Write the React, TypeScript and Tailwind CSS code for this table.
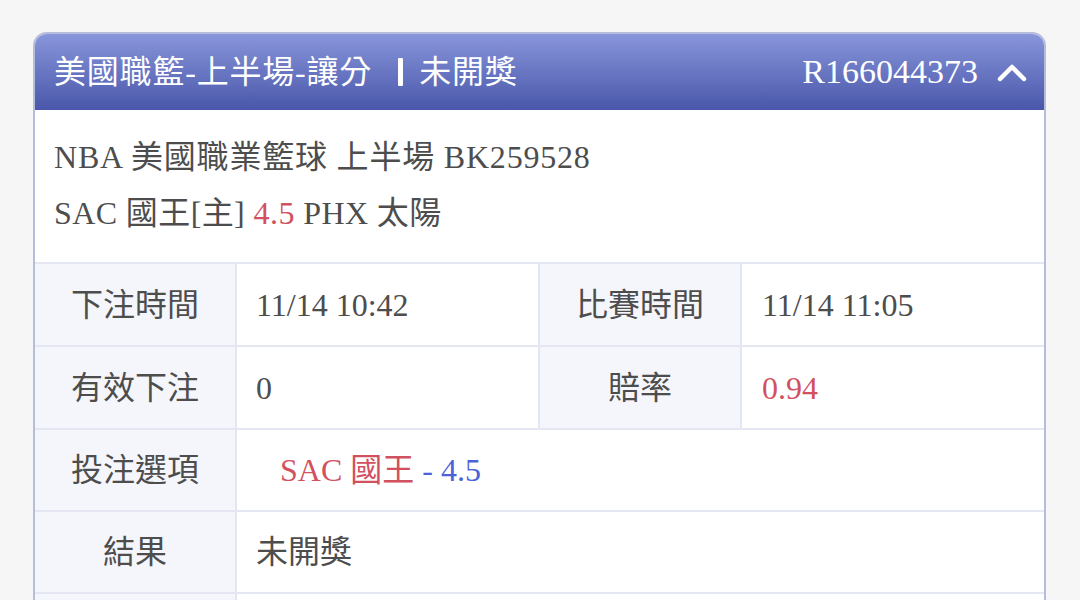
import React from "react";

const font = { fontFamily: '"Liberation Serif", "Noto Sans CJK TC", serif' };

function Label({ children }: { children: React.ReactNode }) {
  return (
    <div className="w-[202px] shrink-0 bg-[#f5f6fb] border-r-2 border-[#e4e6f2] flex items-center justify-center text-[#4d4d4d]">
      {children}
    </div>
  );
}

export default function App() {
  return (
    <div className="w-[1080px] h-[600px] bg-[#f6f6f6] overflow-hidden pt-[32px] pl-[33px]" style={font}>
      <div className="w-[1013px] h-[600px] border-2 border-[#b6bcdc] rounded-t-[14px] overflow-hidden bg-white text-[32px] leading-none">
        {/* Header */}
        <div className="h-[76px] bg-gradient-to-b from-[#8996db] to-[#4a57aa] flex items-center justify-between pl-[19px] pr-[17px] text-white">
          <div className="flex items-center tracking-[0.8px]">
            <span>美國職籃-上半場-讓分</span>
            <span className="w-[5px] h-[28px] bg-white ml-[26px] mr-[16px] rounded-[1px]" />
            <span>未開獎</span>
          </div>
          <div className="flex items-center">
            <span className="text-[34px]">R166044373</span>
            <svg className="ml-[19px]" width="30" height="22" viewBox="0 0 30 22">
              <polyline points="3,18 15,6 27,18" fill="none" stroke="white" strokeWidth="4.5" strokeLinecap="round" strokeLinejoin="round" />
            </svg>
          </div>
        </div>

        {/* Info */}
        <div className="h-[152px] pl-[19px] pt-[19px] text-[#4d4d4d]">
          <div className="h-[56px] flex items-center tracking-[0.8px]">NBA 美國職業籃球 上半場 BK259528</div>
          <div className="h-[56px] flex items-center tracking-[0.4px]">
            <span>SAC 國王[主]&nbsp;</span>
            <span className="text-[#d2515f]">4.5</span>
            <span>&nbsp;PHX 太陽</span>
          </div>
        </div>

        {/* Table */}
        <div className="flex h-[83px] border-t-2 border-[#e4e6f2]">
          <Label>下注時間</Label>
          <div className="w-[303px] shrink-0 border-r-2 border-[#e4e6f2] flex items-center pl-[19px] text-[#4d4d4d]">11/14 10:42</div>
          <Label>比賽時間</Label>
          <div className="flex-1 flex items-center pl-[20px] text-[#4d4d4d]">11/14 11:05</div>
        </div>
        <div className="flex h-[83px] border-t-2 border-[#e4e6f2]">
          <Label>有效下注</Label>
          <div className="w-[303px] shrink-0 border-r-2 border-[#e4e6f2] flex items-center pl-[19px] text-[#4d4d4d]">0</div>
          <Label>賠率</Label>
          <div className="flex-1 flex items-center pl-[20px] text-[#d2515f]">0.94</div>
        </div>
        <div className="flex h-[82px] border-t-2 border-[#e4e6f2]">
          <Label>投注選項</Label>
          <div className="flex-1 flex items-center pl-[43px]">
            <span className="text-[#d2515f]">SAC 國王</span>
            <span className="text-[#4b63d6]">&nbsp;- 4.5</span>
          </div>
        </div>
        <div className="flex h-[82px] border-t-2 border-[#e4e6f2]">
          <Label>結果</Label>
          <div className="flex-1 flex items-center pl-[19px] text-[#4d4d4d]">未開獎</div>
        </div>
        <div className="flex h-[83px] border-t-2 border-[#e4e6f2]">
          <div className="w-[202px] shrink-0 bg-[#f5f6fb] border-r-2 border-[#e4e6f2]" />
          <div className="flex-1" />
        </div>
      </div>
    </div>
  );
}
